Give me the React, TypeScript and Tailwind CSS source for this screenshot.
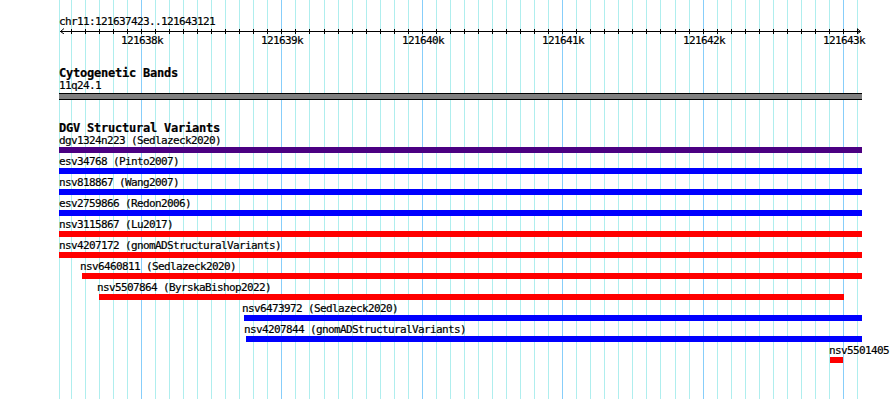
import React from "react";

// view: chr11:121637423..121643121, 800px wide starting at x=60
const START = 121637423;
const PX_PER_BP = 0.1404;
const toX = (bp: number) => Math.round(60 + (bp - START) * PX_PER_BP);

const gridBps = Array.from({ length: 57 }, (_, i) => 121637500 + i * 100);
const majors = [121638000, 121639000, 121640000, 121641000, 121642000, 121643000];

type Variant = {
  id: string;
  label: string;
  labelClass: string;
  barClass: string;
};

const variants: Variant[] = [
  { id: "dgv1324n223", label: "dgv1324n223 (Sedlazeck2020)", labelClass: "ml-[59px]", barClass: "ml-[59px] w-[803px] bg-[#4b0082]" },
  { id: "esv34768", label: "esv34768 (Pinto2007)", labelClass: "ml-[59px]", barClass: "ml-[59px] w-[803px] bg-[#0000ff]" },
  { id: "nsv818867", label: "nsv818867 (Wang2007)", labelClass: "ml-[59px]", barClass: "ml-[59px] w-[803px] bg-[#0000ff]" },
  { id: "esv2759866", label: "esv2759866 (Redon2006)", labelClass: "ml-[59px]", barClass: "ml-[59px] w-[803px] bg-[#0000ff]" },
  { id: "nsv3115867", label: "nsv3115867 (Lu2017)", labelClass: "ml-[59px]", barClass: "ml-[59px] w-[803px] bg-[#ff0000]" },
  { id: "nsv4207172", label: "nsv4207172 (gnomADStructuralVariants)", labelClass: "ml-[59px]", barClass: "ml-[59px] w-[803px] bg-[#ff0000]" },
  { id: "nsv6460811", label: "nsv6460811 (Sedlazeck2020)", labelClass: "ml-[80px]", barClass: "ml-[82px] w-[780px] bg-[#ff0000]" },
  { id: "nsv5507864", label: "nsv5507864 (ByrskaBishop2022)", labelClass: "ml-[97px]", barClass: "ml-[99px] w-[745px] bg-[#ff0000]" },
  { id: "nsv6473972", label: "nsv6473972 (Sedlazeck2020)", labelClass: "ml-[242px]", barClass: "ml-[244px] w-[618px] bg-[#0000ff]" },
  { id: "nsv4207844", label: "nsv4207844 (gnomADStructuralVariants)", labelClass: "ml-[244px]", barClass: "ml-[246px] w-[616px] bg-[#0000ff]" },
  { id: "nsv5501405", label: "nsv5501405", labelClass: "ml-[829px]", barClass: "ml-[830px] w-[13px] bg-[#ff0000]" },
];

function Grid() {
  return (
    <svg className="absolute inset-0" width={890} height={399} shapeRendering="crispEdges">
      <rect x={59} y={0} width={1} height={399} fill="#afeeee" />
      {gridBps.map((bp) => (
        <rect
          key={bp}
          x={toX(bp)}
          y={0}
          width={1}
          height={399}
          fill={bp % 1000 === 0 ? "#87cefa" : "#afeeee"}
        />
      ))}
    </svg>
  );
}

function Ruler() {
  return (
    <>
      <svg className="block" width={890} height={6}>
        <g shapeRendering="crispEdges">
          <rect x={60} y={3} width={801} height={1} fill="#000" />
          {gridBps.map((bp) => (
            <rect key={bp} x={toX(bp)} y={1} width={1} height={5} fill="#000" />
          ))}
        </g>
        <polyline points="64,0.5 60.5,3.5 64,6" fill="none" stroke="#000" strokeWidth={1} />
        <polyline points="857,0.5 860.5,3.5 857,6" fill="none" stroke="#000" strokeWidth={1} />
      </svg>
      <div className="relative h-[13px]">
        {majors.map((bp) => (
          <span
            key={bp}
            className="absolute top-0 w-[42px] text-center leading-[13px] whitespace-nowrap"
            style={{ left: toX(bp) - 20 }}
          >
            {bp / 1000}k
          </span>
        ))}
      </div>
    </>
  );
}

export default function App() {
  return (
    <div className="relative w-[890px] h-[399px] overflow-hidden bg-white text-black font-['DejaVu_Sans_Mono','Liberation_Mono',monospace] text-[11px] tracking-[-0.62px] [-webkit-text-stroke:0.2px_#000]">
      <Grid />
      <div className="relative">
        {/* ruler */}
        <div className="pt-[16px] pl-[59px] h-[28px] leading-[12px]">chr11:121637423..121643121</div>
        <Ruler />

        {/* cytogenetic bands */}
        <div className="mt-[20px] pl-[59px] h-[13px] leading-[13px] font-bold text-[12px] tracking-[-0.22px]">
          Cytogenetic Bands
        </div>
        <div className="pl-[59px] h-[12px] leading-[12px]">11q24.1</div>
        <div className="mt-[1px] ml-[59px] w-[803px] h-[7px] bg-[#808080] border-t border-b border-black" />

        {/* DGV */}
        <div className="mt-[23px] pl-[59px] h-[11px] leading-[11px] font-bold text-[12px] tracking-[-0.22px]">
          DGV Structural Variants
        </div>
        <div className="flex flex-col">
          {variants.map((v) => (
            <div key={v.id} className="h-[21px]">
              <div className={`h-[13px] leading-[13px] whitespace-nowrap ${v.labelClass}`}>{v.label}</div>
              <div className={`h-[6px] ${v.barClass}`} />
            </div>
          ))}
        </div>
      </div>
    </div>
  );
}
